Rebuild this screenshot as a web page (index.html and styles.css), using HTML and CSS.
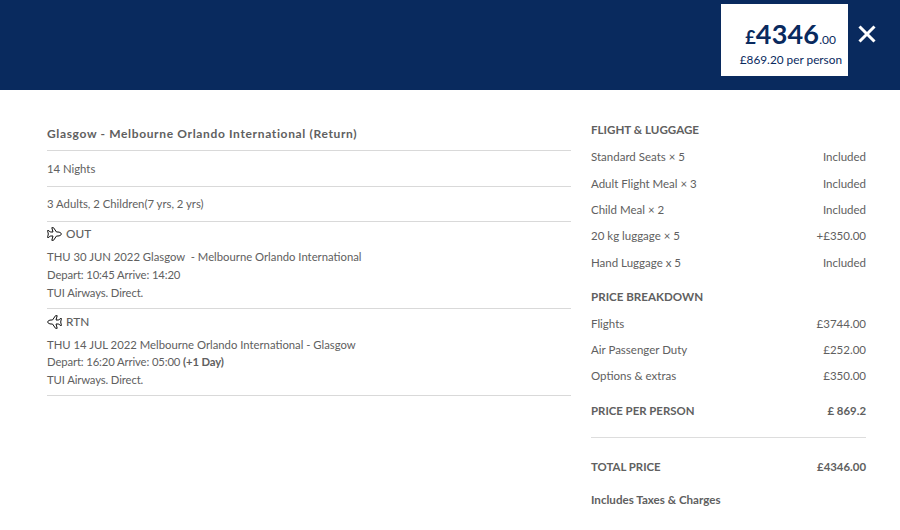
FILE: index.html
```html
<!DOCTYPE html>
<html lang="en">

<head>
    <meta charset="UTF-8">
    <title>Price summary</title>
    <link rel="stylesheet" href="styles.css">
</head>

<body>
    <div class="top">
        <div class="pricebox">
            <div class="total"><span class="pound">£</span><span class="big">4346</span><span class="pence">.00</span></div>
            <div class="perperson">£869.20 per person</div>
        </div>
        <svg class="close" width="18" height="18" viewBox="0 0 18 18"><path d="M1.500 1.500L16.500 16.500M16.500 1.500L1.500 16.500" stroke="#fff" stroke-width="3" fill="none"/></svg>
    </div>
    <div class="main">
        <div class="left">
            <div class="row title">Glasgow - Melbourne Orlando International (Return)</div>
            <div class="row nights">14 Nights</div>
            <div class="row people">3 Adults, 2 Children(7 yrs, 2 yrs)</div>
            <div class="leg">
                <div class="leghead">
                    <svg width="15" height="14" viewBox="0 0 15 14"><path d="M14.500 7C14 5.800 12.500 5 11 5H9.500L6.500 .7H4.800L6 5H3.200L1.800 3.500H.6L1.300 7L.6 10.500H1.800L3.200 9H6L4.800 13.300H6.500L9.500 9H11C12.500 9 14 8.200 14.500 7Z" fill="#fff" stroke="#111" stroke-width="1"/></svg>
                    OUT
                </div>
                <p>THU 30 JUN 2022 Glasgow&nbsp; - Melbourne Orlando International</p>
                <p class="sub">Depart: 10:45 Arrive: 14:20</p>
                <p class="sub">TUI Airways. Direct.</p>
            </div>
            <div class="leg rtn">
                <div class="leghead">
                    <svg width="15" height="14" viewBox="0 0 15 14"><path d="M.5 7C1 5.800 2.500 5 4 5H5.500L8.500 .7H10.200L9 5H11.800L13.200 3.500H14.400L13.700 7L14.400 10.500H13.200L11.800 9H9L10.200 13.300H8.500L5.500 9H4C2.500 9 1 8.200 .5 7Z" fill="#fff" stroke="#111" stroke-width="1"/></svg>
                    RTN
                </div>
                <p>THU 14 JUL 2022 Melbourne Orlando International - Glasgow</p>
                <p class="sub">Depart: 16:20 Arrive: 05:00 <b>(+1 Day)</b></p>
                <p class="sub">TUI Airways. Direct.</p>
            </div>
        </div>
        <div class="right">
            <h3>FLIGHT &amp; LUGGAGE</h3>
            <div class="line"><span>Standard Seats × 5</span><span>Included</span></div>
            <div class="line"><span>Adult Flight Meal × 3</span><span>Included</span></div>
            <div class="line"><span>Child Meal × 2</span><span>Included</span></div>
            <div class="line"><span>20 kg luggage × 5</span><span>+£350.00</span></div>
            <div class="line"><span>Hand Luggage x 5</span><span>Included</span></div>
            <h3 class="second">PRICE BREAKDOWN</h3>
            <div class="line"><span>Flights</span><span>£3744.00</span></div>
            <div class="line"><span>Air Passenger Duty</span><span>£252.00</span></div>
            <div class="line"><span>Options &amp; extras</span><span>£350.00</span></div>
            <div class="sum perhead"><span>PRICE PER PERSON</span><span>£ 869.2</span></div>
            <div class="sum grand"><span>TOTAL PRICE</span><span>£4346.00</span></div>
            <div class="taxes">Includes Taxes &amp; Charges</div>
        </div>
    </div>
</body>

</html>
```

FILE: styles.css
```css
* {
    margin: 0;
    padding: 0;
    box-sizing: border-box;
}

body {
    width: 900px;
    height: 530px;
    overflow: hidden;
    background: #fff;
    font-family: Lato, "Liberation Sans", sans-serif;
    font-size: 11.300px;
    color: #606060;
}

.top {
    height: 90px;
    background-color: #092a5e;
    display: flex;
    justify-content: flex-end;
    align-items: flex-start;
    padding: 4px 24px 0 0;
}

.pricebox {
    width: 127px;
    height: 72px;
    background: #fff;
    color: #092a5e;
    text-align: right;
    padding: 14px 6px 0 0;
}

.total {
    height: 34px;
    line-height: 44px;
    padding-right: 6px;
}
.total span {
    line-height: 1;
}
.pound {
    font-size: 18px;
    font-weight: 700;
}
.big {
    font-size: 27px;
    font-weight: 700;
    letter-spacing: .2px;
}
.pence {
    font-size: 12px;
}
.perperson {
    font-size: 11.800px;
    line-height: 15px;
}

.close {
    margin: 21px 0 0 10px;
}

.main {
    display: flex;
    gap: 20px;
    padding: 30px 34px 0 47px;
}

.left {
    width: 524px;
}
.right {
    width: 275px;
    font-size: 11.500px;
}

.row {
    border-bottom: 1px solid #d9d9d9;
}
.title {
    height: 31px;
    line-height: 27px;
    font-weight: 700;
    font-size: 12px;
    letter-spacing: .65px;
}
.nights {
    height: 36px;
    line-height: 36px;
}
.people {
    height: 35px;
    line-height: 34px;
}

.leg {
    height: 87px;
    padding-top: 3px;
    border-bottom: 1px solid #d9d9d9;
}
.leghead {
    display: flex;
    align-items: center;
    gap: 4px;
    height: 17px;
    font-size: 11.800px;
    font-weight: 500;
    margin-bottom: 6px;
}
.leg p {
    line-height: 18px;
}
.leg .sub {
    letter-spacing: -.13px;
}
.rtn {
    padding-top: 4px;
}
.rtn p:first-of-type {
    line-height: 17px;
}

h3 {
    font-size: 11.600px;
    font-weight: 700;
    line-height: 18px;
    margin-bottom: 9px;
    margin-top: 1.300px;
}
h3.second {
    margin-top: 7.300px;
    margin-bottom: 9px;
}

.line,
.sum {
    display: flex;
    justify-content: space-between;
}
.line {
    height: 26.400px;
    line-height: 18px;
}
.sum {
    font-size: 11.400px;
    font-weight: 700;
    line-height: 18px;
}
.perhead {
    margin-top: 8.200px;
    height: 36px;
    border-bottom: 1px solid #ddd;
}
.grand {
    margin-top: 20.200px;
}
.taxes {
    margin-top: 15px;
    font-size: 11.600px;
    font-weight: 700;
    line-height: 18px;
}
```
